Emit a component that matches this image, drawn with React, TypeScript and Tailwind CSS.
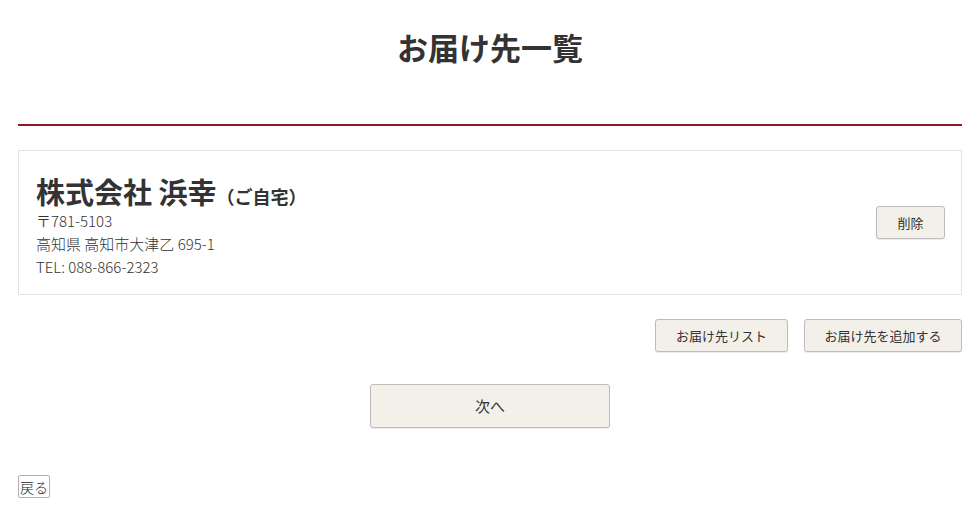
const font = { fontFamily: '"Noto Sans CJK JP", "Noto Sans", sans-serif' };

function SubButton({ label, className }: { label: string; className?: string }) {
  return (
    <button
      className={`h-[33px] rounded-[3px] border border-[#bcbcbc] bg-[#f2f0e9] text-[13px] text-[#333] shadow-[0_1px_1px_rgba(0,0,0,0.08)] ${className ?? ''}`}
    >
      {label}
    </button>
  );
}

export default function App() {
  return (
    <div className="min-h-[512px] bg-white px-[18px] text-[#333]" style={font}>
      <h1 className="pt-[24px] text-center text-[31px] font-bold leading-[46px]">お届け先一覧</h1>

      <div className="mt-[54px] border-b-2 border-[#8c1c1f]" />

      {/* address card */}
      <div className="mt-[24px] flex items-center border border-[#e2e2e2] pl-[17px] pr-[16px]">
        <div className="flex-1 pt-[22px] pb-[16px]">
          <p className="flex h-[36px] items-baseline text-[29px] font-bold leading-[36px]">
            株式会社 浜幸<span className="text-[18px] leading-none">（ご自宅）</span>
          </p>
          <p className="text-[15px] font-light leading-[23px]">〒781-5103</p>
          <p className="text-[15px] font-light leading-[23px]">高知県 高知市大津乙 695-1</p>
          <p className="text-[15px] font-light leading-[23px]">TEL: 088-866-2323</p>
        </div>
        <SubButton label="削除" className="w-[69px]" />
      </div>

      <div className="mt-[24px] flex justify-end gap-[16px]">
        <SubButton label="お届け先リスト" className="w-[133px]" />
        <SubButton label="お届け先を追加する" className="w-[158px]" />
      </div>

      <div className="mt-[32px] flex justify-center">
        <button className="h-[44px] w-[240px] rounded-[3px] border border-[#bcbcbc] bg-[#f2f0e9] text-[15px] text-[#333] shadow-[0_1px_1px_rgba(0,0,0,0.08)]">
          次へ
        </button>
      </div>

      <div className="mt-[47px] flex">
        <button className="h-[23px] rounded-[2px] border border-[#b0b0b0] bg-white px-[1px] text-[14px] font-light leading-[20px] text-[#222]">
          戻る
        </button>
      </div>
    </div>
  );
}
